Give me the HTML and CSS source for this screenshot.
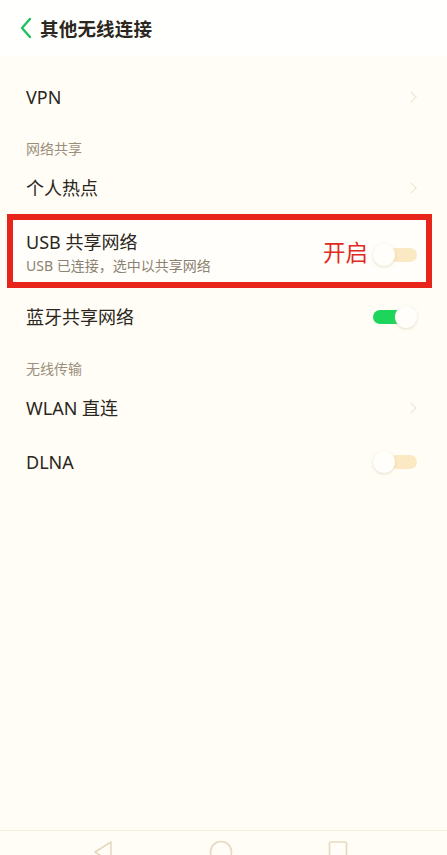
FILE: index.html
```html
<!DOCTYPE html>
<html lang="zh">
<head>
  <meta charset="UTF-8" />
  <meta name="viewport" content="width=device-width, initial-scale=1.0"/>
  <title>其他无线连接</title>
  <link rel="stylesheet" href="styles.css">
</head>
<body>

  <header class="topbar">
    <svg class="back" width="14" height="22" viewBox="0 0 14 22">
      <path d="M11 2 L3 11 L11 20" fill="none" stroke="#1fc160" stroke-width="2.4" stroke-linecap="round" stroke-linejoin="round"/>
    </svg>
    <h1>其他无线连接</h1>
  </header>

  <main class="list">
    <div class="row row-vpn">
      <span class="label">VPN</span>
      <span class="arrow"></span>
    </div>

    <div class="group group-share">网络共享</div>

    <div class="row row-hotspot">
      <span class="label">个人热点</span>
      <span class="arrow"></span>
    </div>

    <div class="mark">
      <div class="mark-text">
        <div class="label">USB 共享网络</div>
        <div class="sub">USB 已连接，选中以共享网络</div>
      </div>
      <span class="note">开启</span>
      <span class="switch"></span>
    </div>

    <div class="row row-bt">
      <span class="label">蓝牙共享网络</span>
      <span class="switch on"></span>
    </div>

    <div class="group group-wireless">无线传输</div>

    <div class="row row-wlan">
      <span class="label">WLAN 直连</span>
      <span class="arrow"></span>
    </div>

    <div class="row row-dlna">
      <span class="label">DLNA</span>
      <span class="switch"></span>
    </div>
  </main>

  <nav class="navbar">
    <svg width="22" height="24" viewBox="0 0 22 24"><path d="M19 2 L3 12 L19 22 Z" fill="none" stroke="#e6d9c0" stroke-width="1.6" stroke-linejoin="round"/></svg>
    <svg width="24" height="24" viewBox="0 0 24 24"><circle cx="12" cy="12" r="10.5" fill="none" stroke="#e6d9c0" stroke-width="1.6"/></svg>
    <svg width="20" height="24" viewBox="0 0 20 24"><rect x="1.5" y="2" width="17" height="20" rx="1" fill="none" stroke="#e6d9c0" stroke-width="1.6"/></svg>
  </nav>

</body>
</html>
```

FILE: styles.css
```css
body {
  margin: 0;
  width: 447px;
  height: 855px;
  overflow: hidden;
  background-color: #fffdf6;
  color: #2b2720;
  font-family: "Noto Sans", "Noto Sans CJK SC", sans-serif;
  display: flex;
  flex-direction: column;
}
.topbar {
  height: 56px;
  flex-shrink: 0;
  display: flex;
  align-items: center;
  padding-left: 19px;
  background-color: #fffffd;
}
.topbar h1 {
  margin: 0 0 0 7px;
  font-size: 18.5px;
  font-weight: 700;
  letter-spacing: 0.2px;
}
.list {
  height: 758px;
  flex-shrink: 0;
  padding-top: 16px;
}
.row {
  display: flex;
  align-items: center;
  justify-content: space-between;
  padding: 0 30px 0 26px;
}
.label {
  font-size: 18px;
  line-height: 22px;
}
.row-vpn { height: 50px; }
.row-hotspot { height: 44px; margin-bottom: 4px; }
.row-bt { height: 58px; }
.row-wlan { height: 54px; }
.row-dlna { height: 54px; }
.group {
  padding-left: 26px;
  font-size: 14px;
  line-height: 18px;
  color: #9a8f7c;
}
.group-share { padding-top: 18px; height: 26px; }
.group-wireless { padding-top: 14px; height: 21px; }
.arrow {
  width: 7px;
  height: 7px;
  border-top: 1.5px solid #ebe4d0;
  border-right: 1.5px solid #ebe4d0;
  transform: rotate(45deg);
  margin-right: 2px;
}
/* highlighted usb row */
.mark {
  margin: 0 15px 0 7px;
  height: 62px;
  border: 6px solid #e8251b;
  display: flex;
  align-items: center;
  padding: 0 9px 0 13px;
  background-color: #fffefb;
}
.mark-text {
  flex: 1;
  padding-top: 2px;
}
.sub {
  margin-top: 4px;
  font-size: 14px;
  line-height: 17px;
  color: #8c8271;
}
.note {
  color: #e02a1d;
  font-size: 22.5px;
  margin: 0 5px 0 0;
}
.mark .switch {
  margin-top: 7px;
}
.switch {
  position: relative;
  width: 44px;
  height: 22px;
  flex-shrink: 0;
}
.switch::before {
  content: "";
  position: absolute;
  right: 0;
  top: 4px;
  width: 28px;
  height: 14px;
  border-radius: 7px;
  background-color: #fbe9c4;
}
.switch::after {
  content: "";
  position: absolute;
  left: 0;
  top: 0;
  width: 22px;
  height: 22px;
  border-radius: 50%;
  background-color: #fffefa;
  box-shadow: 0 1px 3px rgba(190, 160, 110, 0.35);
}
.switch.on::before {
  left: 0;
  right: auto;
  width: 30px;
  background-color: #1ed55c;
}
.switch.on::after {
  left: auto;
  right: 0;
}
.navbar {
  flex-shrink: 0;
  height: 40px;
  border-top: 1px solid #f6f0e2;
  display: flex;
  justify-content: space-between;
  align-items: flex-start;
  padding: 9px 99px 0 92px;
}
```
